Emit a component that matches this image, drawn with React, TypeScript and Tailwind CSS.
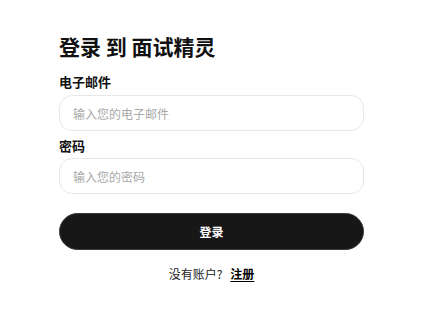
import React from "react";

export default function App() {
  return (
    <div
      className="w-[425px] h-[317px] bg-white overflow-hidden"
      style={{ fontFamily: '"Noto Sans CJK SC", "Noto Sans", sans-serif' }}
    >
      <div className="w-[305px] ml-[59px] pt-[31px] flex flex-col">
        <h1 className="text-[21px] leading-[30px] font-bold text-[#111]">登录 到 面试精灵</h1>
        <label className="mt-[12px] text-[13px] leading-[18px] font-semibold text-[#111]">电子邮件</label>
        <input
          className="mt-[4px] h-[36px] w-full rounded-[13px] border border-[#e8e8e8] px-[13px] text-[12px] outline-none placeholder:text-[#a8a8a8]"
          placeholder="输入您的电子邮件"
        />
        <label className="mt-[6px] text-[13px] leading-[18px] font-semibold text-[#111]">密码</label>
        <input
          type="password"
          className="mt-[3px] h-[36px] w-full rounded-[13px] border border-[#e8e8e8] px-[13px] text-[12px] outline-none placeholder:text-[#a8a8a8]"
          placeholder="输入您的密码"
        />
        <button className="mt-[19px] h-[37px] w-full rounded-full bg-[#171717] border border-[#3a3a3a] text-white text-[12px] font-bold">
          登录
        </button>
        <div className="mt-[15px] text-center text-[12px] leading-[18px] text-[#222]">
          没有账户?<span className="ml-[8px] font-bold text-black underline underline-offset-2">注册</span>
        </div>
      </div>
    </div>
  );
}
